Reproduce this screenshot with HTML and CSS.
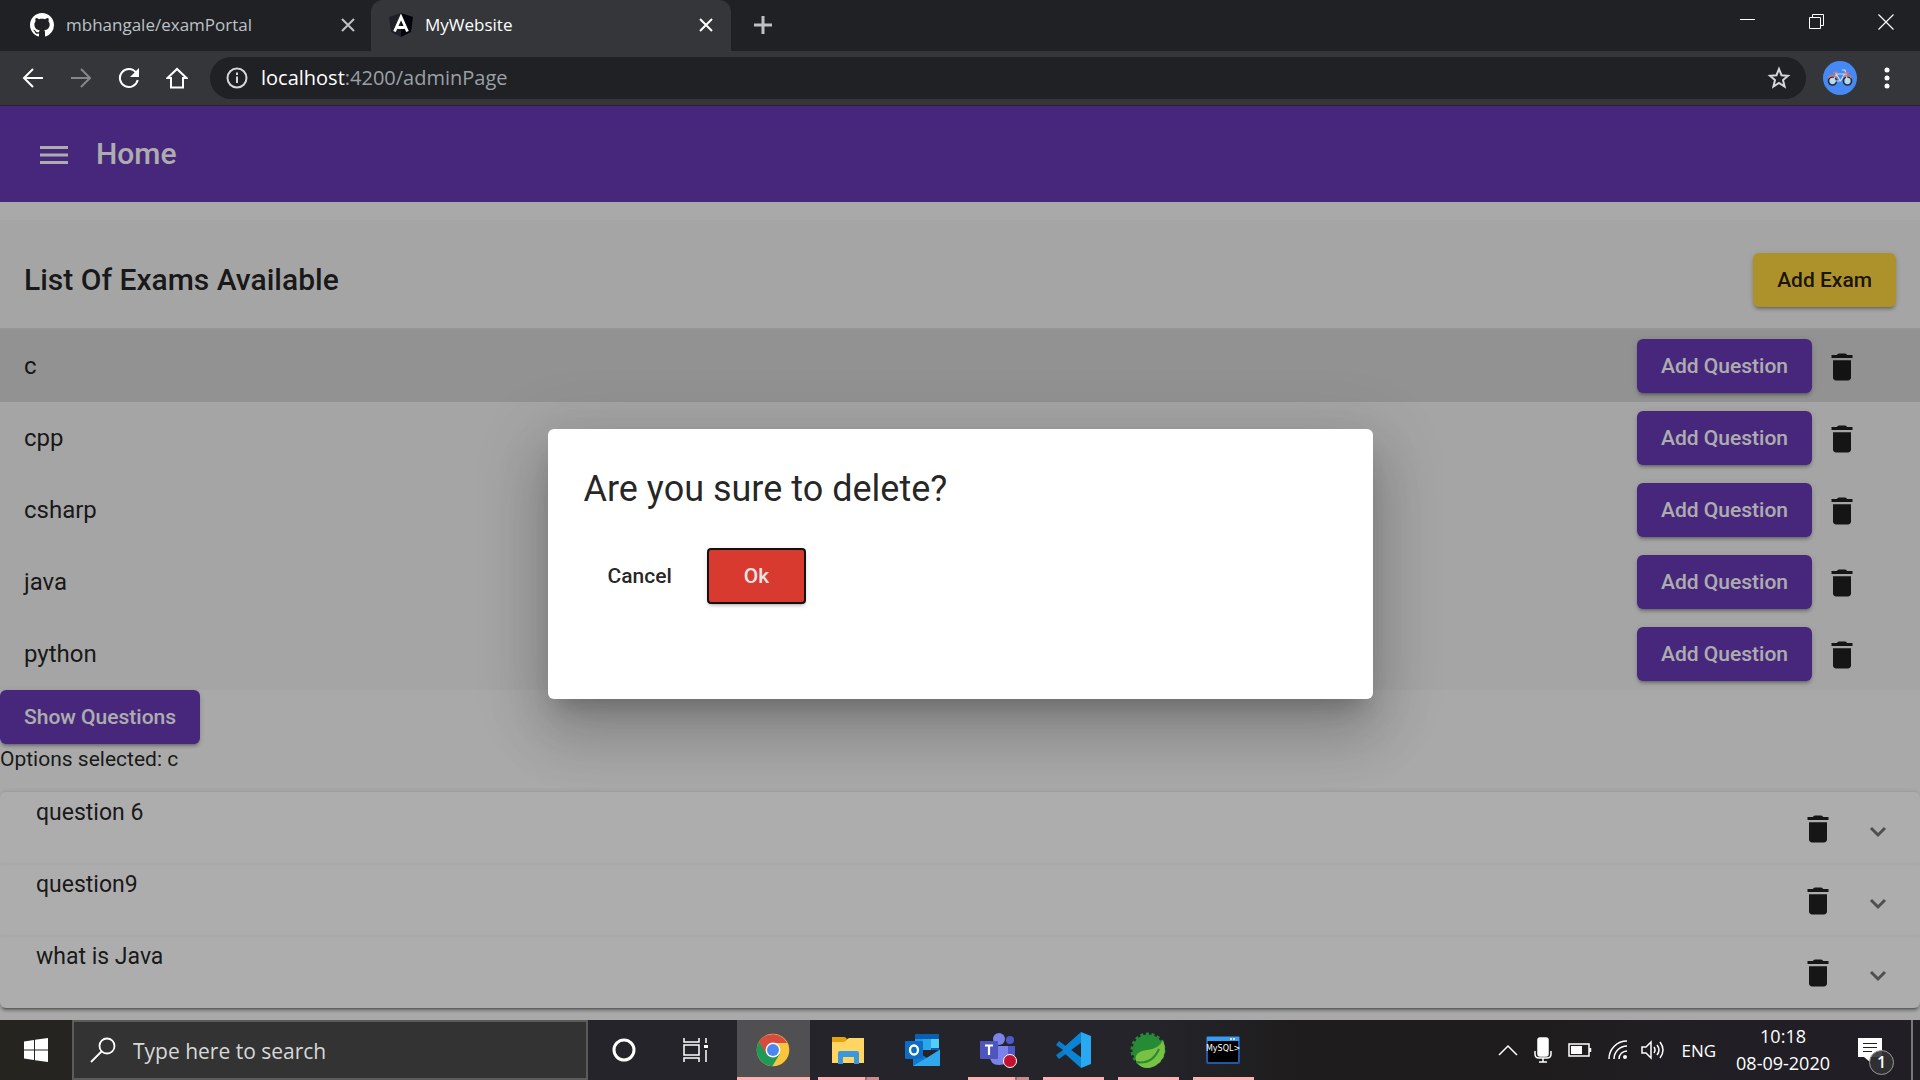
FILE: index.html
```html
<!DOCTYPE html>
<html lang="en">
<head>
<meta charset="utf-8">
<title>MyWebsite</title>
<link rel="stylesheet" href="styles.css">
</head>
<body>
<svg class="defs" aria-hidden="true">
  <symbol id="trash" viewBox="0 0 24 24"><path d="M6 19c0 1.100.900 2 2 2h8c1.100 0 2-.900 2-2V7.500H6zM19 4h-3.500l-.700-.700a1 1 0 0 0-.700-.300H9.900a1 1 0 0 0-.7.300L8.500 4H5v2h14z" fill="currentColor"/></symbol>
  <symbol id="chevron" viewBox="0 0 18 12"><path d="M2 2l7 7 7-7" fill="none" stroke="currentColor" stroke-width="3"/></symbol>
  <symbol id="cross" viewBox="0 0 14 14"><path d="M1 1l12 12M13 1L1 13" fill="none" stroke="currentColor" stroke-width="2"/></symbol>
</svg>
<div class="screen">
  <header class="tabs">
    <div class="tab">
      <svg class="favicon" viewBox="0 0 16 16"><path fill="#fff" d="M8 0C3.580 0 0 3.580 0 8c0 3.540 2.290 6.530 5.470 7.590.400.070.550-.170.550-.380 0-.190-.010-.820-.010-1.490-2.010.370-2.530-.490-2.690-.940-.090-.230-.480-.940-.820-1.130-.280-.150-.680-.520-.010-.530.630-.010 1.080.580 1.230.820.720 1.210 1.870.870 2.330.660.070-.520.280-.870.510-1.070-1.780-.200-3.640-.890-3.640-3.950 0-.870.310-1.590.820-2.150-.080-.200-.360-1.020.080-2.120 0 0 .670-.210 2.200.820.640-.180 1.320-.270 2-.270s1.360.090 2 .270c1.530-1.040 2.200-.820 2.200-.820.440 1.100.160 1.920.080 2.120.510.560.820 1.270.820 2.150 0 3.070-1.870 3.750-3.650 3.950.290.250.540.730.540 1.480 0 1.070-.010 1.930-.010 2.200 0 .210.150.460.550.380A8.010 8.010 0 0 0 16 8c0-4.420-3.580-8-8-8z"/></svg>
      <span class="tab-title">mbhangale/examPortal</span>
      <button class="tab-close" aria-label="Close tab"><svg width="14" height="14"><use href="#cross"/></svg></button>
    </div>
    <div class="tab tab-active">
      <svg class="favicon" viewBox="0 0 24 24"><path fill="#1d1f2b" d="M12 0L0 4l2 15 10 5z"/><path fill="#03050c" d="M12 0l12 4-2 15-10 5z"/><path fill="none" stroke="#fff" stroke-width="2.800" d="M5.500 18.500L12 4l6.500 14.500M8.500 14.500h7"/></svg>
      <span class="tab-title">MyWebsite</span>
      <button class="tab-close" aria-label="Close tab"><svg width="14" height="14"><use href="#cross"/></svg></button>
    </div>
    <button class="new-tab" aria-label="New tab"><svg width="18" height="18" viewBox="0 0 18 18"><path d="M9 0v18M0 9h18" stroke="currentColor" stroke-width="3"/></svg></button>
    <div class="window-controls">
      <button aria-label="Minimize"><svg width="15" height="15"><path d="M0 5.500h15" stroke="#fff"/></svg></button>
      <button aria-label="Restore"><svg width="15" height="15" fill="none" stroke="#fff"><path d="M.5 3.500h11v11H.5zM3.500 3.500v-3h11v11h-3"/></svg></button>
      <button aria-label="Close"><svg width="16" height="16"><path d="M.5.5l15 15M15.500.5l-15 15" stroke="#fff" stroke-width="1.200"/></svg></button>
    </div>
  </header>
  <nav class="address-bar">
    <button class="nav-button" aria-label="Back"><svg width="22" height="20" viewBox="0 0 22 20"><path d="M11 1L2 10l9 9M2 10h19" class="line"/></svg></button>
    <button class="nav-button nav-off" aria-label="Forward"><svg width="22" height="20" viewBox="0 0 22 20"><path d="M11 1l9 9-9 9M20 10H1" class="line"/></svg></button>
    <button class="nav-button" aria-label="Reload"><svg width="22" height="22" viewBox="0 0 22 22"><path d="M18 5.500A9 9 0 1 0 19.700 13" class="line"/><path d="M21 1v9h-9z" fill="currentColor"/></svg></button>
    <button class="nav-button" aria-label="Home"><svg width="22" height="22" viewBox="0 0 22 22"><path d="M1.500 11L11 2l9.500 9H17v9.500H5V11z" class="line"/></svg></button>
    <div class="omnibox">
      <svg width="22" height="22" viewBox="0 0 22 22"><circle cx="11" cy="11" r="9.500" class="line"/><path d="M11 9.500V16M11 5.500V8" class="line"/></svg>
      <span class="url"><b>localhost</b>:4200/adminPage</span>
      <svg width="24" height="24" viewBox="0 0 24 24"><path d="M12 3l2.500 6.200 6.500.5-5 4.300 1.600 6.500L12 17l-5.600 3.500L8 14 3 9.700l6.500-.5z" class="line"/></svg>
    </div>
    <svg class="avatar" viewBox="0 0 34 34"><circle cx="17" cy="17" r="17" fill="#4689f5"/><g fill="#b9d7ee" stroke="#222c3c" stroke-width="1.700"><circle cx="9.500" cy="20" r="4"/><circle cx="24.500" cy="20" r="4"/></g><path d="M9.500 20l4-7h8l-4 7h-8M12.500 12l5 8M19 9h3l2.500 11" fill="none" stroke="#c3e0f2" stroke-width="1.200"/><path d="M10 11.500h5M21.500 12h4M5 17c2-3 7-3 9 0M20.500 16c2-2 6-2 8 1" fill="none" stroke="#ef7252" stroke-width="1.500"/></svg>
    <button class="nav-button" aria-label="Menu"><svg width="6" height="22" fill="currentColor"><circle cx="3" cy="3" r="2.500"/><circle cx="3" cy="11" r="2.500"/><circle cx="3" cy="19" r="2.500"/></svg></button>
  </nav>

  <main class="viewport">
    <div class="app-bar">
      <button class="menu-button" aria-label="Open menu"><svg width="28" height="18"><path d="M0 1.500h28M0 9h28M0 16.500h28" stroke="currentColor" stroke-width="3"/></svg></button>
      <h1>Home</h1>
    </div>
    <section class="exams">
      <div class="exams-head">
        <h2>List Of Exams Available</h2>
        <button class="btn btn-accent">Add Exam</button>
      </div>
      <ul class="exam-list">
        <li class="exam selected"><span class="exam-name">c</span><button class="btn btn-primary">Add Question</button><button class="icon-btn" aria-label="Delete c"><svg><use href="#trash"/></svg></button></li>
        <li class="exam"><span class="exam-name">cpp</span><button class="btn btn-primary">Add Question</button><button class="icon-btn" aria-label="Delete cpp"><svg><use href="#trash"/></svg></button></li>
        <li class="exam"><span class="exam-name">csharp</span><button class="btn btn-primary">Add Question</button><button class="icon-btn" aria-label="Delete csharp"><svg><use href="#trash"/></svg></button></li>
        <li class="exam"><span class="exam-name">java</span><button class="btn btn-primary">Add Question</button><button class="icon-btn" aria-label="Delete java"><svg><use href="#trash"/></svg></button></li>
        <li class="exam"><span class="exam-name">python</span><button class="btn btn-primary">Add Question</button><button class="icon-btn" aria-label="Delete python"><svg><use href="#trash"/></svg></button></li>
      </ul>
    </section>
    <button class="btn btn-primary show">Show Questions</button>
    <p class="status">Options selected: c</p>
    <section class="questions">
      <div class="question"><span class="question-text">question 6</span><button class="icon-btn" aria-label="Delete question 6"><svg><use href="#trash"/></svg></button><button class="expand" aria-label="Expand question 6"><svg><use href="#chevron"/></svg></button></div>
      <div class="question"><span class="question-text">question9</span><button class="icon-btn" aria-label="Delete question9"><svg><use href="#trash"/></svg></button><button class="expand" aria-label="Expand question9"><svg><use href="#chevron"/></svg></button></div>
      <div class="question"><span class="question-text">what is Java</span><button class="icon-btn" aria-label="Delete what is Java"><svg><use href="#trash"/></svg></button><button class="expand" aria-label="Expand what is Java"><svg><use href="#chevron"/></svg></button></div>
    </section>
    <div class="backdrop">
      <div class="dialog" role="dialog" aria-labelledby="dialog-title">
        <h2 id="dialog-title">Are you sure to delete?</h2>
        <div class="dialog-actions">
          <button class="btn btn-text">Cancel</button>
          <button class="btn btn-warn">Ok</button>
        </div>
      </div>
    </div>
  </main>

  <footer class="taskbar">
    <button class="start" aria-label="Start"><svg width="24" height="24" viewBox="0 0 24 24" fill="#fff"><path d="M0 3.500L10 2v9.500H0zM11 1.800L24 0v11.500H11zM0 12.500h10V22L0 20.500zM11 12.500h13V24l-13-1.800z"/></svg></button>
    <label class="search">
      <svg width="26" height="26" viewBox="0 0 26 26" fill="none" stroke="#fff" stroke-width="1.800"><circle cx="17" cy="9" r="7.500"/><path d="M11.500 14.500L1 25"/></svg>
      <input type="text" aria-label="Search" placeholder="Type here to search">
    </label>
    <button class="tool" aria-label="Cortana"><svg width="24" height="24"><circle cx="12" cy="12" r="10" fill="none" stroke="#fff" stroke-width="3"/></svg></button>
    <button class="tool" aria-label="Task view"><svg width="26" height="24" fill="none" stroke="#fff" stroke-width="1.500"><path d="M1 0v4h15V0M1 7h15v10H1zM1 24v-4h15v4M23 0v5M23 12v12"/><path d="M21 7h4v3h-4z" fill="#fff" stroke="none"/></svg></button>
    <div class="apps">
      <button class="app app-current" aria-label="Chrome"><svg width="34" height="34" viewBox="0 0 48 48"><circle cx="24" cy="24" r="23" fill="#fbc53b"/><path fill="#d84b3e" d="M4.100 12.500a23 23 0 0 1 39.800 1.500H24L13.500 30z"/><path fill="#1d9a58" d="M4.100 12.500A23 23 0 0 0 23 47l11-18-10 5-10-5.500z"/><circle cx="24" cy="24" r="10.500" fill="#fff"/><circle cx="24" cy="24" r="8.500" fill="#4a88f0"/></svg></button>
      <button class="app app-running app-many" aria-label="File Explorer"><svg width="34" height="28" viewBox="0 0 34 28"><path fill="#ffd564" d="M1 4h14l3-2h15v25H1z"/><path fill="#e4a30c" d="M1 1h12q2 0 3 2-1 3-4 3H1z"/><path fill="#3a96dd" d="M7 27V17q0-2 2-2h17q2 0 2 2v11h-5v-7H12v7H7z"/></svg></button>
      <button class="app" aria-label="Outlook"><svg width="36" height="34" viewBox="0 0 36 34"><path fill="#0a5fb0" d="M10 1h24v16H10z"/><path fill="#2a93e4" d="M10 6h12v11H10z"/><path fill="#50d0fa" d="M26 6h8v9h-8z"/><path fill="#29a7ea" d="M18 6h8v11h-8z"/><path fill="#1279cf" d="M8 16l14 9 13-9v17H8z"/><path fill="#31a8ee" d="M8 33l27-16v15q0 1-1 1z"/><rect y="8" width="18" height="18" rx="1" fill="#0d6cc4"/><ellipse cx="9" cy="17" rx="4" ry="4.500" fill="none" stroke="#fff" stroke-width="2.300"/></svg></button>
      <button class="app app-running app-many" aria-label="Teams"><svg width="38" height="36" viewBox="0 0 38 36"><circle cx="20" cy="7" r="6" fill="#7b83eb"/><circle cx="31" cy="8" r="4" fill="#5059c9"/><path fill="#5059c9" d="M24 14h12v10q0 5-6 6h-6z"/><path fill="#7b83eb" d="M11 14h18v10q0 9-9 9t-9-9z"/><rect x="1" y="9" width="18" height="18" rx="1" fill="#4e56be"/><path d="M6 13.500h8M10 13.500V23" stroke="#fff" stroke-width="2.200"/><circle cx="31" cy="29" r="6.500" fill="#c4112f" stroke="#fff"/></svg></button>
      <button class="app app-running" aria-label="Visual Studio Code"><svg width="36" height="36" viewBox="0 0 36 36"><path d="M2.500 11L27 29M2.500 25L27 7" stroke="#0a7bc8" stroke-width="5"/><path fill="#0b85d3" d="M26 0v10L15.500 18 26 26v10L8 20v-4z"/><path fill="#29a9f2" d="M26 0l10 4v28l-10 4z"/></svg></button>
      <button class="app app-running" aria-label="Spring Tools"><svg width="36" height="36" viewBox="0 0 36 36"><circle cx="18" cy="18" r="15.500" fill="#278a35"/><circle cx="18" cy="18" r="16" fill="none" stroke="#278a35" stroke-width="3" stroke-dasharray="3 2.600"/><path fill="#79c143" d="M33 8q5 13-3 22-6 6-13 6-6 0-10-5-2-3-1-7 2-5 11-6 12-1 16-10z"/><path d="M6 30q16 3 23-13" fill="none" stroke="#278a35" stroke-width="2"/></svg></button>
      <button class="app app-running" aria-label="MySQL"><svg width="34" height="28" viewBox="0 0 34 28"><rect x="1" y="1" width="32" height="26" rx="1" fill="#000" stroke="#2457a6" stroke-width="2"/><path fill="#3a9bea" d="M1 1h32v4H1z"/><path d="M24 3h6" stroke="#e5d5d5" stroke-width="2" stroke-dasharray="2 1"/><text x="17" y="15" text-anchor="middle" class="prompt">MySQL&gt;</text></svg></button>
    </div>
    <div class="tray">
      <svg width="20" height="12" class="thin"><path d="M1 11l9-9 9 9"/></svg>
      <svg width="18" height="26" class="thin"><rect x="4" y="1" width="10" height="18" rx="2" fill="#fff"/><path d="M1 14v3q0 4 4 4h8q4 0 4-4v-3M9 21v4M5 25h8"/></svg>
      <svg width="24" height="14" class="thin"><path d="M1 1h20v12H1zM22.500 5v4"/><path d="M3 3h11v8H3z" fill="#fff" stroke="none"/></svg>
      <svg width="20" height="20" class="thin"><path d="M1 19A18 18 0 0 1 19 1M6 19A13 13 0 0 1 19 6M11 19a8 8 0 0 1 8-8"/><circle cx="17" cy="17" r="2" fill="#fff" stroke="none"/></svg>
      <svg width="24" height="20" class="thin volume"><path d="M1 7h4l5-5v16l-5-5H1zM13 7q2 3 0 6M16 5q4 5 0 10M19 2q6 8 0 16"/></svg>
      <span class="lang">ENG</span>
      <div class="clock"><span>10:18</span><span>08-09-2020</span></div>
      <button class="notices" aria-label="Notifications"><svg width="24" height="24"><path fill="#fff" d="M0 0h24v19H12v5l-6-5H0z"/><path d="M5 5.500h14M5 9.500h14M5 13.500h9" stroke="#222" stroke-width="1.200"/></svg><span class="badge">1</span></button>
    </div>
  </footer>
</div>
</body>
</html>
```
FILE: styles.css
```css
* { box-sizing: border-box; }
body { margin: 0; font-family: Roboto, "Liberation Sans", sans-serif; color: rgba(0, 0, 0, .87); }
h1, h2, p, ul { margin: 0; padding: 0; }
button { border: 0; padding: 0; background: none; color: inherit; font: inherit; cursor: pointer; }
svg { display: block; flex: none; }
.defs { position: absolute; width: 0; height: 0; }
.screen { display: flex; flex-direction: column; min-height: 100vh; }
.line { fill: none; stroke: currentColor; stroke-width: 2; }

/* Browser chrome */
.tabs { display: flex; height: 51px; background: #202124; color: #bdc1c6; font-family: "Open Sans", "Noto Sans", sans-serif; font-size: 17px; }
.tab { display: flex; align-items: center; width: 371px; padding: 0 16px 2px 30px; }
.tab-active { width: 360px; padding: 0 18px 2px; background: #35363a; border-radius: 12px 12px 0 0; color: #fff; }
.favicon { width: 24px; height: 24px; margin-right: 12px; }
.tab-title { flex: 1; white-space: nowrap; }
.new-tab { display: grid; place-items: center; width: 64px; padding-bottom: 2px; }
.window-controls { display: flex; margin-left: auto; padding-bottom: 8px; }
.window-controls button { display: grid; place-items: center; width: 69px; }
.address-bar { display: flex; align-items: center; height: 55px; padding: 0 9px; background: #35363a; border-bottom: 1px solid #27282b; color: #fff; }
.nav-button { display: grid; place-items: center; width: 48px; height: 48px; }
.nav-off { color: #85878a; }
.omnibox { display: flex; flex: 1; align-items: center; height: 42px; margin: 0 17px 0 9px; padding: 0 15px 0 16px; border-radius: 21px; background: #202124; color: #d5d7da; }
.url { flex: 1; padding-left: 13px; color: #9aa0a6; font: 20px/28px "Open Sans", "Noto Sans", sans-serif; }
.url b { color: #fff; font-weight: 400; }
.avatar { width: 34px; height: 34px; margin-right: 6px; }

/* Page */
.viewport { position: relative; flex: 1; overflow: hidden; background: #fafafa; }
.app-bar { display: flex; align-items: center; gap: 28px; height: 96px; padding: 0 40px; background: #673ab7; color: #fff; }
.menu-button { padding-top: 2px; }
.app-bar h1 { font-size: 30px; font-weight: 500; line-height: 48px; }
.exams { margin-top: 18px; background: #f4f4f4; }
.exams-head { display: flex; align-items: center; justify-content: space-between; height: 110px; padding: 11px 24px 0; border-bottom: 2px solid #dcdcdc; }
.exams-head h2 { font-size: 30px; font-weight: 500; }
.exam-list { list-style: none; }
.exam { display: flex; align-items: center; height: 72px; padding: 0 48px 0 24px; }
.exam-name { flex: 1; font-size: 24px; }
.selected { background: #d7d7d7; }
.btn { height: 54px; padding: 0 24px; border-radius: 6px; font-size: 21px; font-weight: 500; line-height: 54px; white-space: nowrap; }
.btn-primary, .btn-accent, .btn-warn { box-shadow: 0 4px 2px -3px rgba(0, 0, 0, .2), 0 3px 3px rgba(0, 0, 0, .14), 0 1px 7px rgba(0, 0, 0, .12); }
.btn-primary { background: #673ab7; color: #fff; }
.btn-accent { background: #ffd740; }
.icon-btn { display: grid; place-items: center; width: 60px; height: 60px; padding-top: 2px; }
.icon-btn svg { width: 36px; height: 36px; }
.show { display: block; }
.status { height: 48px; font-size: 21px; line-height: 30px; }
.questions { border-radius: 6px; background: #fff; box-shadow: 0 4px 2px -3px rgba(0, 0, 0, .3), 0 3px 3px rgba(0, 0, 0, .2), 0 1px 7px rgba(0, 0, 0, .12); }
.question { display: flex; align-items: center; height: 72px; padding: 0 24px 0 36px; box-shadow: 0 0 3px rgba(0, 0, 0, .08); }
.question-text { flex: 1; align-self: flex-start; padding-top: 5px; font-size: 23px; line-height: 32px; }
.expand { display: grid; place-items: center; width: 36px; height: 36px; margin-left: 12px; padding-top: 8px; color: rgba(0, 0, 0, .54); }
.expand svg { width: 18px; height: 12px; }
.backdrop { position: absolute; inset: 0; display: grid; place-items: center; padding-top: 2px; background: rgba(0, 0, 0, .32); }
.dialog { width: 825px; max-width: 80vw; min-height: 270px; padding: 36px; border-radius: 6px; background: #fff; box-shadow: 0 16px 22px -10px rgba(0, 0, 0, .2), 0 36px 57px 4px rgba(0, 0, 0, .14), 0 14px 69px 12px rgba(0, 0, 0, .12); }
.dialog h2 { font-size: 36px; font-weight: 400; line-height: 48px; }
.dialog-actions { display: flex; gap: 12px; margin-top: 36px; }
.btn-warn { padding: 0 36px; background: #d93a2f; color: #e4e4e4; outline: 2px solid #111; outline-offset: -1px; border-radius: 3px; }

/* Taskbar */
.taskbar { display: flex; height: 60px; background: linear-gradient(90deg, #25241f 0, #25242a 30%, #24242a 60%, #1e1c1c 68%, #1e1c1c 80%, #211f25 90%); color: #fff; font-family: "Open Sans", "Noto Sans", sans-serif; }
.start, .tool { display: grid; place-items: center; width: 72px; }
.search { display: flex; align-items: center; width: 516px; gap: 17px; padding: 0 16px; border: 2px solid #5b5b5b; background: #333; }
.search input { flex: 1; min-width: 0; padding: 2px 0 0; border: 0; outline: 0; background: none; color: #fff; font: 21px/28px "Open Sans", "Noto Sans", sans-serif; }
.search input::placeholder { color: #d8d8d8; opacity: 1; }
.apps { display: flex; margin-left: 4px; }
.app { display: grid; place-items: center; width: 75px; height: 60px; padding-right: 2px; }
.app-current { width: 73px; margin: 0 1px; padding-top: 3px; border-bottom: 3px solid #ffb0b0; background: #505053; }
.app-running { background: linear-gradient(#ffb0b0, #ffb0b0) center bottom / 61px 3px no-repeat; }
.app-many { background: linear-gradient(90deg, #ffb0b0 77%, #987072 77%, #987072 80%, #c98d8f 80%) center bottom / 61px 3px no-repeat; }
.prompt { fill: #fff; font: 8px "DejaVu Sans", sans-serif; }
.tray { display: flex; align-items: center; gap: 16px; margin-left: auto; margin-right: 7px; padding-right: 16px; border-right: 2px solid #777; }
.thin { fill: none; stroke: #fff; stroke-width: 1.500; }
.volume { margin-left: -3px; }
.lang { margin-right: 4px; font-size: 17px; }
.clock { display: flex; flex-direction: column; align-items: center; font-size: 18px; line-height: 27px; }
.notices { position: relative; margin: 0 13px 0 12px; }
.badge { position: absolute; left: 11px; top: 12px; width: 25px; height: 25px; border: 1px solid #999; border-radius: 50%; background: rgba(50, 50, 52, .9); font-size: 16px; font-weight: 600; line-height: 22px; text-align: center; }
```
